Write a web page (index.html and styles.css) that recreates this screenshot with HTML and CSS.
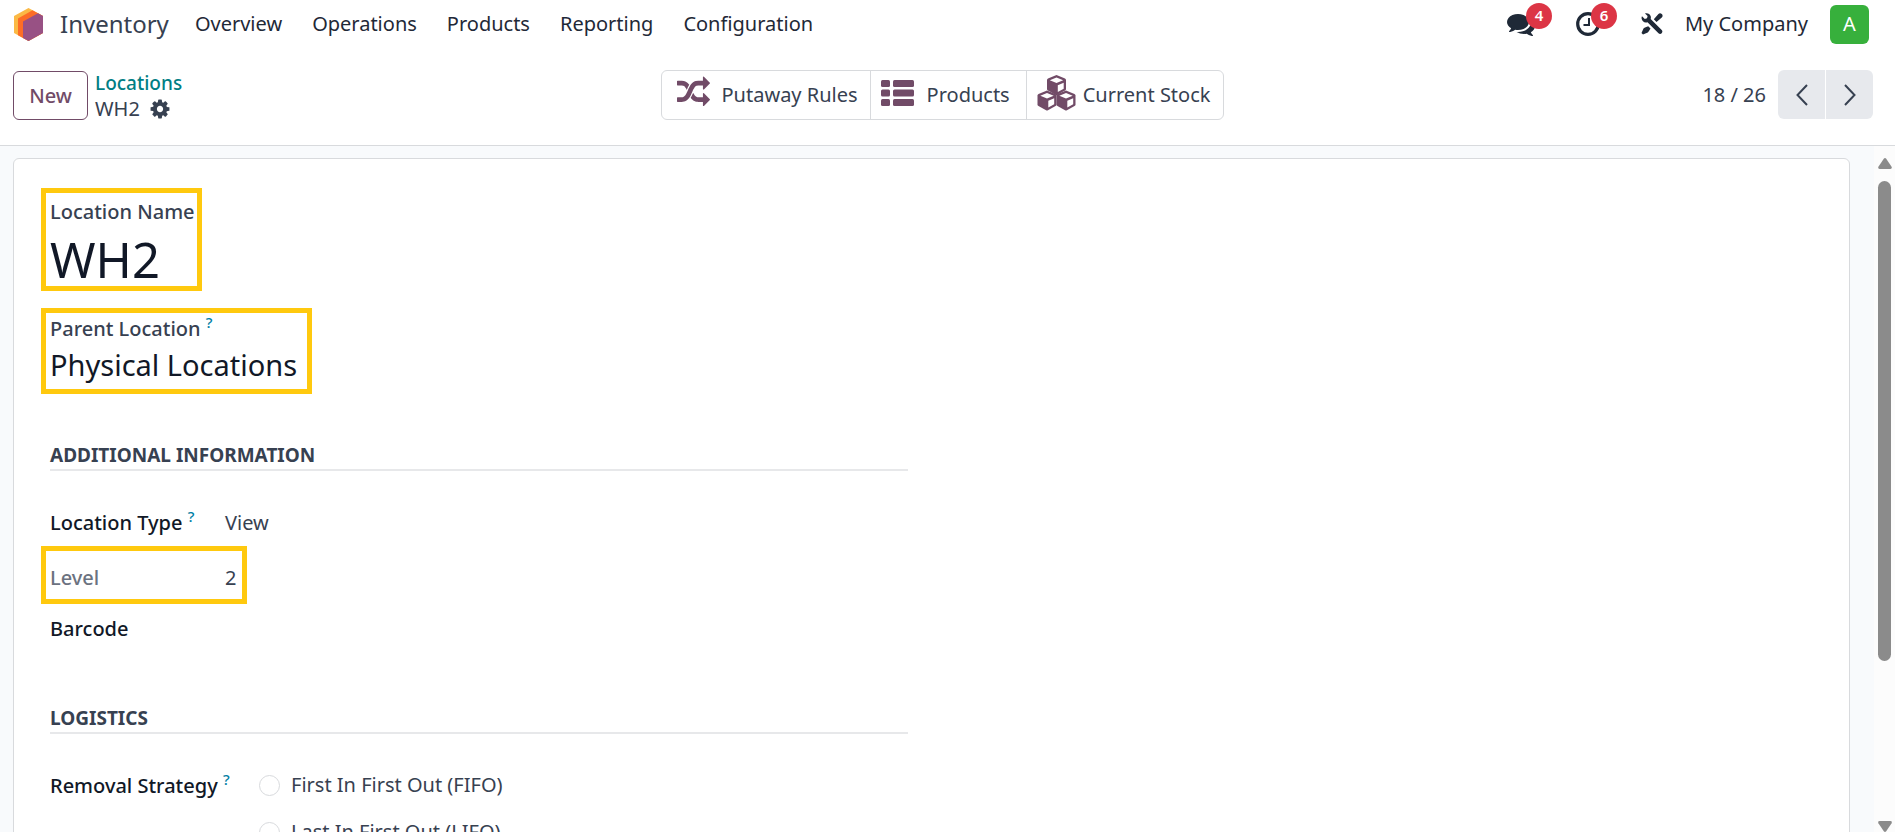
FILE: index.html
```html
<!DOCTYPE html>
<html lang="en">
<head>
<meta charset="utf-8">
<title>WH2 - Locations</title>
<link rel="stylesheet" href="styles.css">
</head>
<body>
<header class="navbar">
  <a class="brand" href="#">
    <svg class="brand-logo" viewBox="0 0 29 33" aria-hidden="true">
      <path fill="#fbb945" d="M14.500 0 29 8v17L14.500 33 0 25V8z"/>
      <path fill="#fc6d26" d="M18.500 2.200 29 8v17l-14.500 8L4 27.200V10.500z"/>
      <path fill="#985184" d="M24 5.200 29 8v17l-14.500 8L9 30V13.500z"/>
    </svg>
    <span>Inventory</span>
  </a>
  <nav class="menu">
    <a href="#">Overview</a>
    <a href="#">Operations</a>
    <a href="#">Products</a>
    <a href="#">Reporting</a>
    <a href="#">Configuration</a>
  </nav>
  <div class="systray">
    <button class="tray chat" aria-label="Messages">
      <svg width="28" height="28" viewBox="0 0 1792 1792"><path d="M1408 768q0 139-94 257t-256.500 186.500-353.500 68.500q-86 0-176-16-124 88-278 128-36 9-86 16h-3q-11 0-20.500-8t-11.500-21q-1-3-1-6.500t.5-6.500 2-6l2.500-5 3.500-5.500 4-5 4.500-5 4-4.500q5-6 23-25t26-29.500 22.500-29 25-38.500 20.500-44q-124-72-195-177t-71-224q0-139 94-257t256.500-186.500 353.500-68.500 353.500 68.500 256.500 186.500 94 257zm384 256q0 120-71 224.500t-195 176.500q10 24 20.500 44t25 38.500 22.500 29 26 29.500 23 25q1 1 4 4.500t4.500 5 4 5 3.500 5.500l2.500 5 2 6 .5 6.500-1 6.500q-3 14-13 22t-22 7q-50-7-86-16-154-40-278-128-90 16-176 16-271 0-472-132 58 4 88 4 161 0 309-45t264-129q125-92 192-212t67-254q0-77-23-152 129 71 204 178t75 230z"/></svg>
      <span class="badge">4</span>
    </button>
    <button class="tray clock" aria-label="Activities">
      <svg width="24" height="24" viewBox="0 0 24 24"><circle cx="12" cy="12" r="10.300" fill="none" stroke="currentColor" stroke-width="3.200"/><path d="M12 6h2v8H7.500v-2H12z"/></svg>
      <span class="badge">6</span>
    </button>
    <button class="tray tools" aria-label="Developer tools">
      <svg width="22" height="22" viewBox="0 0 22 22"><path d="M1 3.200 3.800 6 6 5.300 6.600 3.100 4 .5C6.500-.2 9 1 9.700 3.300c.3 1 .2 1.900 0 2.700l11 11c.9.900.9 2.300 0 3.200s-2.300.9-3.200 0l-11-11C3.500 10.200.9 8.200.6 5.500.5 4.700.6 3.900 1 3.200zM17.200 1.200c1-1 2.400-1.200 3.600-.2 1.100 1.100 1 2.600 0 3.600L15.500 9 12.800 6.300zM7.200 13.200l2.300 2.300c-.9 1.200-1.400 2.900-2.700 4L2 21.500.5 20 2.500 15.500c1.200-1.300 3-1.400 4.700-2.300z"/></svg>
    </button>
    <button class="company">My Company</button>
    <button class="avatar" aria-label="User menu">A</button>
  </div>
</header>

<section class="control-panel">
  <div class="cp-left">
    <button class="new">New</button>
    <div class="crumbs">
      <a href="#">Locations</a>
      <div class="crumb-current"><span>WH2</span>
        <button class="gear" aria-label="Actions"><svg width="22" height="22" viewBox="0 0 1792 1792"><path d="M1152 896q0-106-75-181t-181-75-181 75-75 181 75 181 181 75 181-75 75-181zm512-109v222q0 12-8 23t-20 13l-185 28q-19 54-39 91 35 50 107 138 10 12 10 25t-9 23q-27 37-99 108t-94 71q-12 0-26-9l-138-108q-44 23-91 38-16 136-29 186-7 28-36 28h-222q-14 0-24.500-8.500t-11.500-21.500l-28-184q-49-16-90-37l-141 107q-10 9-25 9-14 0-25-11-126-114-165-168-7-10-7-23 0-12 8-23 15-21 51-66.500t54-70.500q-27-50-41-99l-183-27q-13-2-21-12.500t-8-23.500v-222q0-12 8-23t19-13l186-28q14-46 39-92-40-57-107-138-10-12-10-24 0-10 9-23 26-36 98.500-107.500t94.500-71.500q13 0 26 10l138 107q44-23 91-38 16-136 29-186 7-28 36-28h222q14 0 24.500 8.500t11.500 21.500l28 184q49 16 90 37l142-107q9-9 24-9 13 0 25 10 129 119 165 170 7 8 7 22 0 12-8 23-15 21-51 66.500t-54 70.500q26 50 41 98l183 28q13 2 21 12.500t8 23.500z"/></svg></button>
      </div>
    </div>
  </div>
  <div class="stat-buttons">
    <button class="stat putaway">
      <svg width="33" height="33" viewBox="0 0 1792 1792"><path d="M666 481q-60 92-137 273-22-45-37-72.500t-40.500-63.500-51-56.500-63-35-81.500-14.500h-224q-14 0-23-9t-9-23v-192q0-14 9-23t23-9h224q250 0 410 225zm1126 799q0 14-9 23l-320 320q-9 9-23 9-13 0-22.500-9.500t-9.500-22.500v-192q-32 0-85 .5t-81 1-73-1-71-5-64-10.500-63-18.500-58-28.500-59-40-55-53.500-56-69.500q59-93 136-273 22 45 37 72.500t40.500 63.500 51 56.500 63 35 81.500 14.500h256v-192q0-14 9-23t23-9q12 0 24 10l319 319q9 9 9 23zm0-896q0 14-9 23l-320 320q-9 9-23 9-13 0-22.500-9.500t-9.500-22.500v-192h-256q-48 0-87 15t-69 45-51 61.500-45 77.500q-32 62-78 171-29 66-49.500 111t-54 105-64 100-74 83-90 68.500-106.500 42-128 16.500h-224q-14 0-23-9t-9-23v-192q0-14 9-23t23-9h224q48 0 87-15t69-45 51-61.500 45-77.500q32-62 78-171 29-66 49.500-111t54-105 64-100 74-83 90-68.500 106.500-42 128-16.500h256v-192q0-14 9-23t23-9q12 0 24 10l319 319q9 9 9 23z"/></svg>
      <span>Putaway Rules</span>
    </button>
    <button class="stat products">
      <svg width="33" height="26" viewBox="0 0 33 26"><rect width="9" height="7" rx="1.500"/><rect x="12" width="21" height="7" rx="1.500"/><rect y="9.500" width="9" height="7" rx="1.500"/><rect x="12" y="9.500" width="21" height="7" rx="1.500"/><rect y="19" width="9" height="7" rx="1.500"/><rect x="12" y="19" width="21" height="7" rx="1.500"/></svg>
      <span>Products</span>
    </button>
    <button class="stat stock">
      <svg width="39" height="36" viewBox="0 0 39 36">
        <defs><g id="cube"><path d="M10 0 18.500 3.500q1 .5 1 1.500v9q0 1-1 1.600L10.500 20h-1L1.500 15.600q-1-.6-1-1.600V5q0-1 1-1.500z"/><path fill="#fff" d="M10 2.400 16.700 5.200 10 8.100 3.300 5.200zM11.300 10.300 17.200 7.700v6L11.300 17z"/></g></defs>
        <use href="#cube" x="9.500"/><use href="#cube" y="15.500"/><use href="#cube" x="19" y="15.500"/>
      </svg>
      <span>Current Stock</span>
    </button>
  </div>
  <div class="pager">
    <span>18 / 26</span>
    <div class="pager-buttons">
      <button aria-label="Previous"><svg width="12" height="22" viewBox="0 0 12 22"><path d="M11 1 1.500 11 11 21"/></svg></button>
      <button aria-label="Next"><svg width="12" height="22" viewBox="0 0 12 22"><path d="M1 1l9.500 10L1 21"/></svg></button>
    </div>
  </div>
</section>

<main class="content">
  <div class="sheet-area">
    <form class="sheet">
      <div class="title-field mark">
        <label for="name">Location Name</label>
        <output class="name" id="name">WH2</output>
      </div>
      <div class="parent-field mark">
        <label for="parent">Parent Location <sup>?</sup></label>
        <output class="parent" id="parent">Physical Locations</output>
      </div>
      <section class="group">
        <h2>Additional Information</h2>
        <div class="row"><label for="type">Location Type <sup>?</sup></label><output id="type">View</output></div>
        <div class="row level mark"><label for="level">Level</label><output id="level">2</output></div>
        <div class="row"><label for="barcode">Barcode</label><output id="barcode"></output></div>
      </section>
      <section class="group logistics">
        <h2>Logistics</h2>
        <div class="strategy" role="radiogroup" aria-labelledby="strategy">
          <span class="strategy-label" id="strategy">Removal Strategy <sup>?</sup></span>
          <div class="options">
            <label><input type="radio" name="strategy">First In First Out (FIFO)</label>
            <label><input type="radio" name="strategy">Last In First Out (LIFO)</label>
          </div>
        </div>
      </section>
    </form>
  </div>
  <div class="scrollbar" aria-hidden="true">
    <svg width="14" height="11" viewBox="0 0 14 11"><path d="M5.800.8q1.200-1.500 2.400 0l5.400 8q.8 2-1.200 2.200H1.600Q-.4 10.800.4 8.800z"/></svg>
    <div class="track"><div class="thumb"></div></div>
    <svg width="14" height="11" viewBox="0 0 14 11"><path d="M5.800 10.200q1.200 1.500 2.400 0l5.400-8Q14.400.2 12.400 0H1.600Q-.4.2.4 2.200z"/></svg>
  </div>
</main>
</body>
</html>
```
FILE: styles.css
```css
* { box-sizing: border-box; }

body {
  margin: 0;
  height: 100vh;
  display: flex;
  flex-direction: column;
  overflow: hidden;
  background: #fff;
  color: #374151;
  font: 20px/26px "Segoe UI", "Noto Sans", sans-serif;
}

a { color: inherit; text-decoration: none; }
button { font: inherit; color: inherit; background: none; border: 0; padding: 0; }
svg { display: block; flex: none; fill: currentColor; }

.navbar {
  display: flex;
  align-items: center;
  height: 48px;
  padding: 0 26px 0 14px;
  color: #1f2937;
}
.brand { display: flex; align-items: center; gap: 17px; font-size: 24px; color: #374151; }
.brand-logo { width: 29px; height: 33px; }
.menu { display: flex; gap: 30px; margin-left: 26px; }
.systray { display: flex; align-items: center; margin-left: auto; }
.tray { position: relative; }
.clock { margin-left: 41px; }
.tools { margin-left: 41px; }
.company { margin-left: 22px; }
.badge {
  position: absolute;
  left: 19px;
  top: -7px;
  width: 26px;
  height: 26px;
  border-radius: 50%;
  background: #dc3545;
  color: #fff;
  font-size: 15px;
  font-weight: 600;
  line-height: 25px;
}
.clock .badge { left: 15px; top: -9px; }
.avatar {
  width: 39px;
  height: 39px;
  margin-left: 22px;
  border-radius: 6px;
  background: #37b03c;
  color: #fff;
}

.control-panel {
  display: grid;
  grid-template-columns: 1fr auto 1fr;
  align-items: start;
  height: 98px;
  padding: 22px 22px 0 13px;
  border-bottom: 1px solid #d8dadd;
}
.cp-left { display: flex; gap: 7px; }
.new {
  width: 75px;
  height: 49px;
  margin-top: 1px;
  border: 1px solid #714b67;
  border-radius: 6px;
  color: #714b67;
  font-weight: 500;
}
.crumbs > a { color: #017e84; font-size: 19px; font-weight: 500; }
.crumb-current { display: flex; align-items: center; gap: 9px; }

.stat-buttons { display: flex; }
.stat {
  display: flex;
  align-items: center;
  height: 50px;
  border: 1px solid #d8dadd;
  margin-left: -1px;
}
.stat svg { color: #714b67; margin-bottom: 5px; }
.stat:first-child { border-radius: 6px 0 0 6px; }
.stat:last-child { border-radius: 0 6px 6px 0; }
.putaway { gap: 12px; padding: 0 12px 0 15px; }
.products { gap: 13px; padding: 0 16px 0 10px; }
.stock { gap: 7px; padding: 0 13px 0 10px; }

.pager { display: flex; align-items: center; justify-content: flex-end; gap: 12px; }
.pager-buttons { display: flex; gap: 1px; }
.pager-buttons button {
  display: grid;
  place-items: center;
  width: 47px;
  height: 49px;
  background: #e7e9ed;
  border-radius: 6px 0 0 6px;
}
.pager-buttons button:last-child { border-radius: 0 6px 6px 0; }
.pager-buttons path { fill: none; stroke: #374151; stroke-width: 2; }

.content { flex: 1; display: flex; min-height: 0; }
.sheet-area {
  flex: 1;
  padding: 12px 24px 0 13px;
  background: #f8fafc;
  overflow: hidden;
}
.sheet {
  display: flex;
  flex-direction: column;
  align-items: flex-start;
  min-height: 900px;
  padding: 29px 36px;
  background: #fff;
  border: 1px solid #d8dadd;
  border-radius: 6px;
}
.mark { border: 5px solid #ffc90e; margin-left: -9px; padding-left: 4px; }
.title-field, .parent-field { display: flex; flex-direction: column; font-weight: 500; }
.title-field { height: 103px; padding-right: 2px; padding-top: 6px; }
.parent-field { height: 86px; padding-right: 10px; margin-top: 17px; padding-top: 2px; }
.name { font-size: 49px; line-height: 68px; font-weight: 400; color: #111827; }
.parent { font-size: 29px; line-height: 46px; font-weight: 400; color: #111827; }
sup {
  color: #0180a5;
  font-size: 15px;
  line-height: 14px;
  vertical-align: 8px;
}

.group { width: 50%; max-width: 858px; margin-top: 48px; }
.group h2 {
  margin: 0 0 38px;
  padding-bottom: 1px;
  border-bottom: 2px solid #e7e8ea;
  font-size: 19px;
  line-height: 26px;
  font-weight: 700;
  text-transform: uppercase;
}
.row { display: grid; grid-template-columns: 175px auto; align-items: center; }
.row label, .strategy-label { color: #111827; font-weight: 500; }
.level { width: 206px; height: 58px; margin-top: 10px; margin-bottom: 12px; padding-top: 5px; }
.row.level label { color: #6b7280; }
.logistics { margin-top: 63px; }
.strategy { display: grid; grid-template-columns: 209px auto; }
.options { display: flex; flex-direction: column; gap: 21px; }
.options label { display: flex; align-items: center; gap: 11px; }
.options input {
  appearance: none;
  width: 21px;
  height: 21px;
  margin: 0;
  border: 1px solid #d8dadd;
  border-radius: 50%;
  background: #fff;
}

.scrollbar {
  display: flex;
  flex-direction: column;
  align-items: center;
  width: 21px;
  padding: 12px 0 0;
  background: #fcfcfc;
  color: #8b8b8b;
}
.track { flex: 1; width: 13px; padding: 12px 0 8px; }
.thumb { height: 76%; border-radius: 7px; background: #8b8b8b; }
```
